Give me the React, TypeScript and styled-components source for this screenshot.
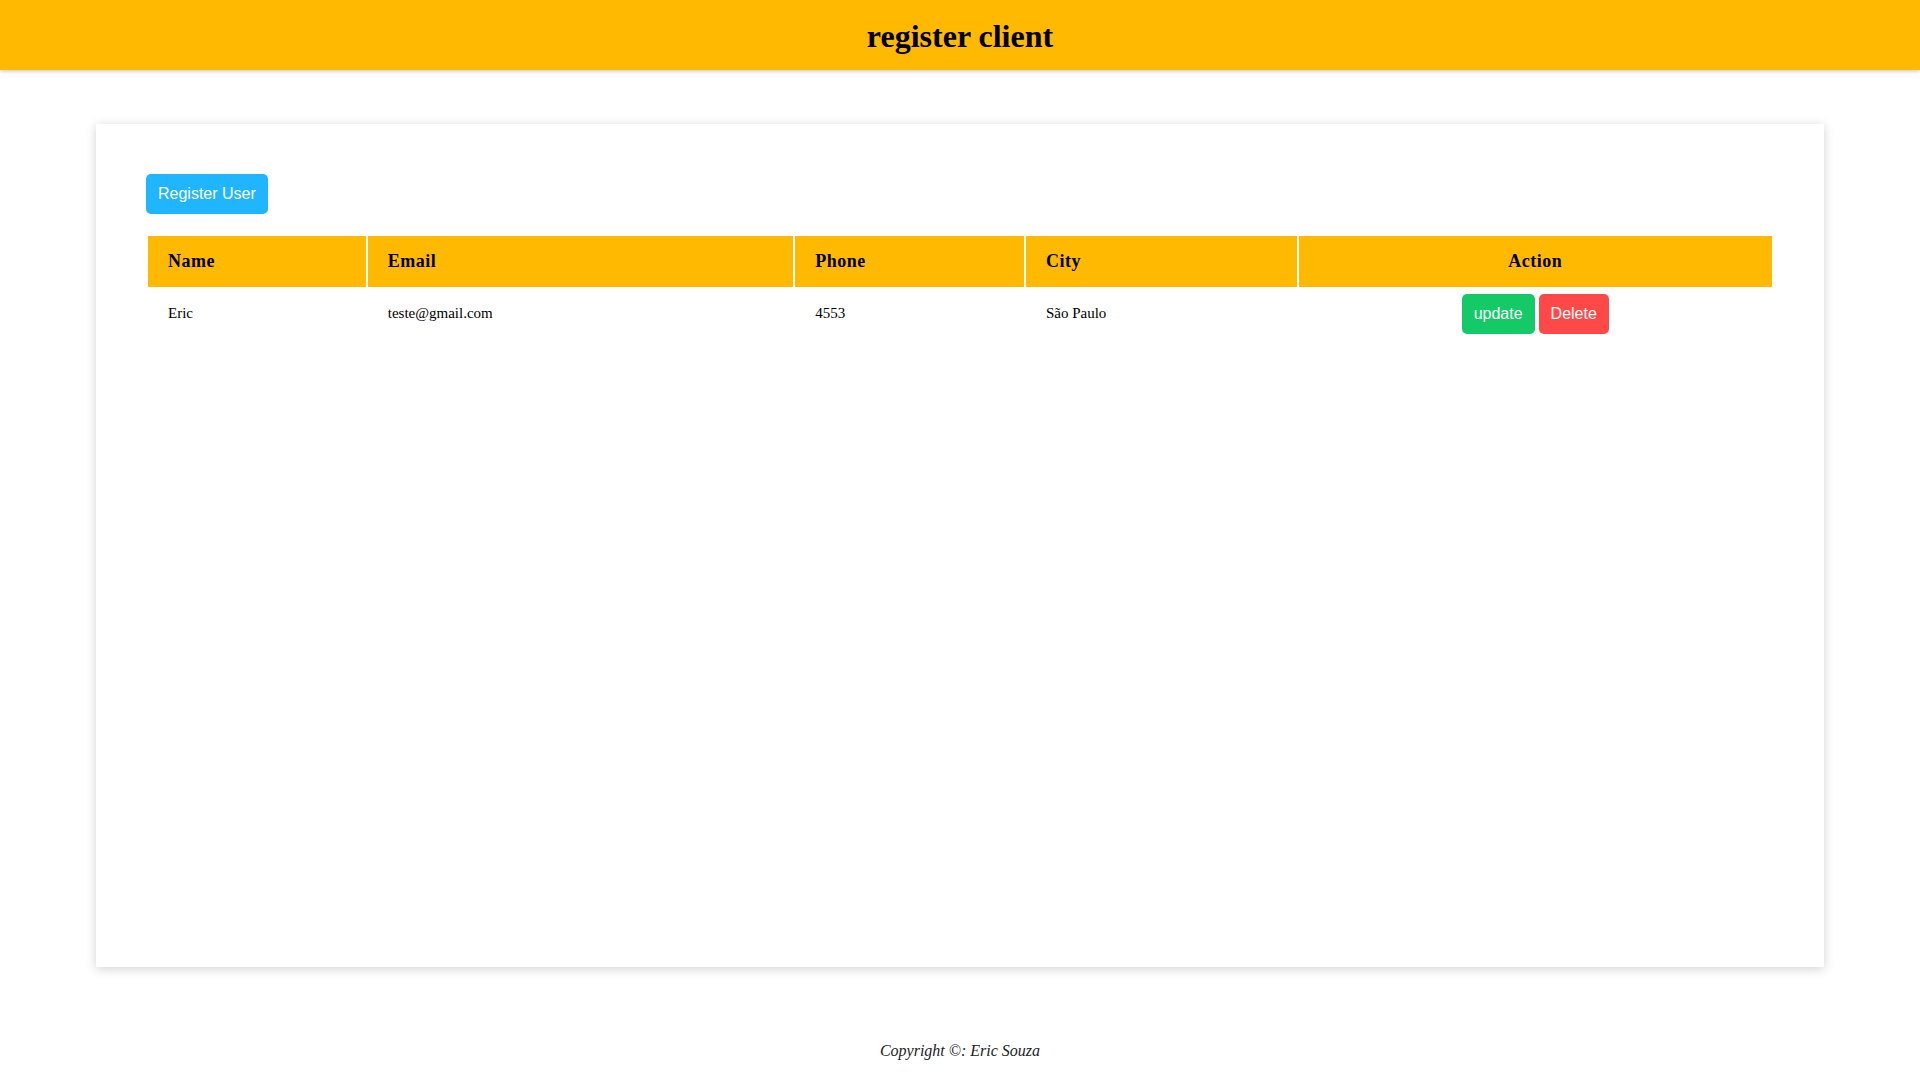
import { createGlobalStyle } from "styled-components";
import styled from "styled-components";

const GlobalStyle = createGlobalStyle`
  body {
    margin: 0;
    background: #fff;
    font-family: "Liberation Serif", "Times New Roman", serif;
    color: #000;
  }
`;

const Header = styled.header`
  height: 70px;
  background-color: #ffb900;
  box-shadow: 0 1px 4px rgba(0, 0, 0, 0.25);
  display: flex;
  align-items: center;
  justify-content: center;
  h1 {
    margin: 2px 0 0;
    font-size: 32px;
    font-weight: bold;
  }
`;

const Main = styled.main`
  padding-top: 54px;
`;

const Card = styled.section`
  box-sizing: border-box;
  width: 90%;
  height: 843px;
  margin: 0 auto;
  padding: 50px;
  background: #fff;
  box-shadow: 0 2px 10px rgba(0, 0, 0, 0.18);
`;

const Button = styled.button<{ $color: string }>`
  border: 0;
  border-radius: 5px;
  padding: 11px 12px;
  background-color: ${({ $color }) => $color};
  color: #fff;
  font-family: "Liberation Sans", Arial, sans-serif;
  font-size: 16px;
  line-height: 18px;
  cursor: pointer;
`;

const Table = styled.table`
  width: 100%;
  margin-top: 20px;
  border-spacing: 2px;
  th {
    background-color: #ffb900;
    padding: 15px 20px;
    height: 50px;
    box-sizing: border-box;
    text-align: left;
    font-size: 18px;
    letter-spacing: 0.5px;
    font-weight: bold;
  }
  td {
    padding: 4px 20px 5px;
    height: 50px;
    box-sizing: border-box;
    font-size: 15px;
  }
  th.center,
  td.center {
    text-align: center;
  }
`;

const Col = styled.col<{ $width: number }>`
  width: ${({ $width }) => $width}px;
`;

const Actions = styled.div`
  display: flex;
  justify-content: center;
  gap: 4px;
`;

const Footer = styled.footer`
  padding-top: 75px;
  text-align: center;
  font-style: italic;
  font-size: 16px;
  color: #222;
`;

const columns = [218, 426, 229, 271, 474];

const clients = [
  { name: "Eric", email: "teste@gmail.com", phone: "4553", city: "São Paulo" },
];

function App() {
  return (
    <>
      <GlobalStyle />
      <Header>
        <h1>register client</h1>
      </Header>
      <Main>
        <Card>
          <Button $color="#1fb6ff">Register User</Button>
          <Table>
            <colgroup>
              {columns.map((w, i) => (
                <Col key={i} $width={w} />
              ))}
            </colgroup>
            <thead>
              <tr>
                <th>Name</th>
                <th>Email</th>
                <th>Phone</th>
                <th>City</th>
                <th className="center">Action</th>
              </tr>
            </thead>
            <tbody>
              {clients.map((c) => (
                <tr key={c.email}>
                  <td>{c.name}</td>
                  <td>{c.email}</td>
                  <td>{c.phone}</td>
                  <td>{c.city}</td>
                  <td className="center">
                    <Actions>
                      <Button $color="#13ca66">update</Button>
                      <Button $color="#ff4949">Delete</Button>
                    </Actions>
                  </td>
                </tr>
              ))}
            </tbody>
          </Table>
        </Card>
      </Main>
      <Footer>Copyright ©: Eric Souza</Footer>
    </>
  );
}

export default App;
